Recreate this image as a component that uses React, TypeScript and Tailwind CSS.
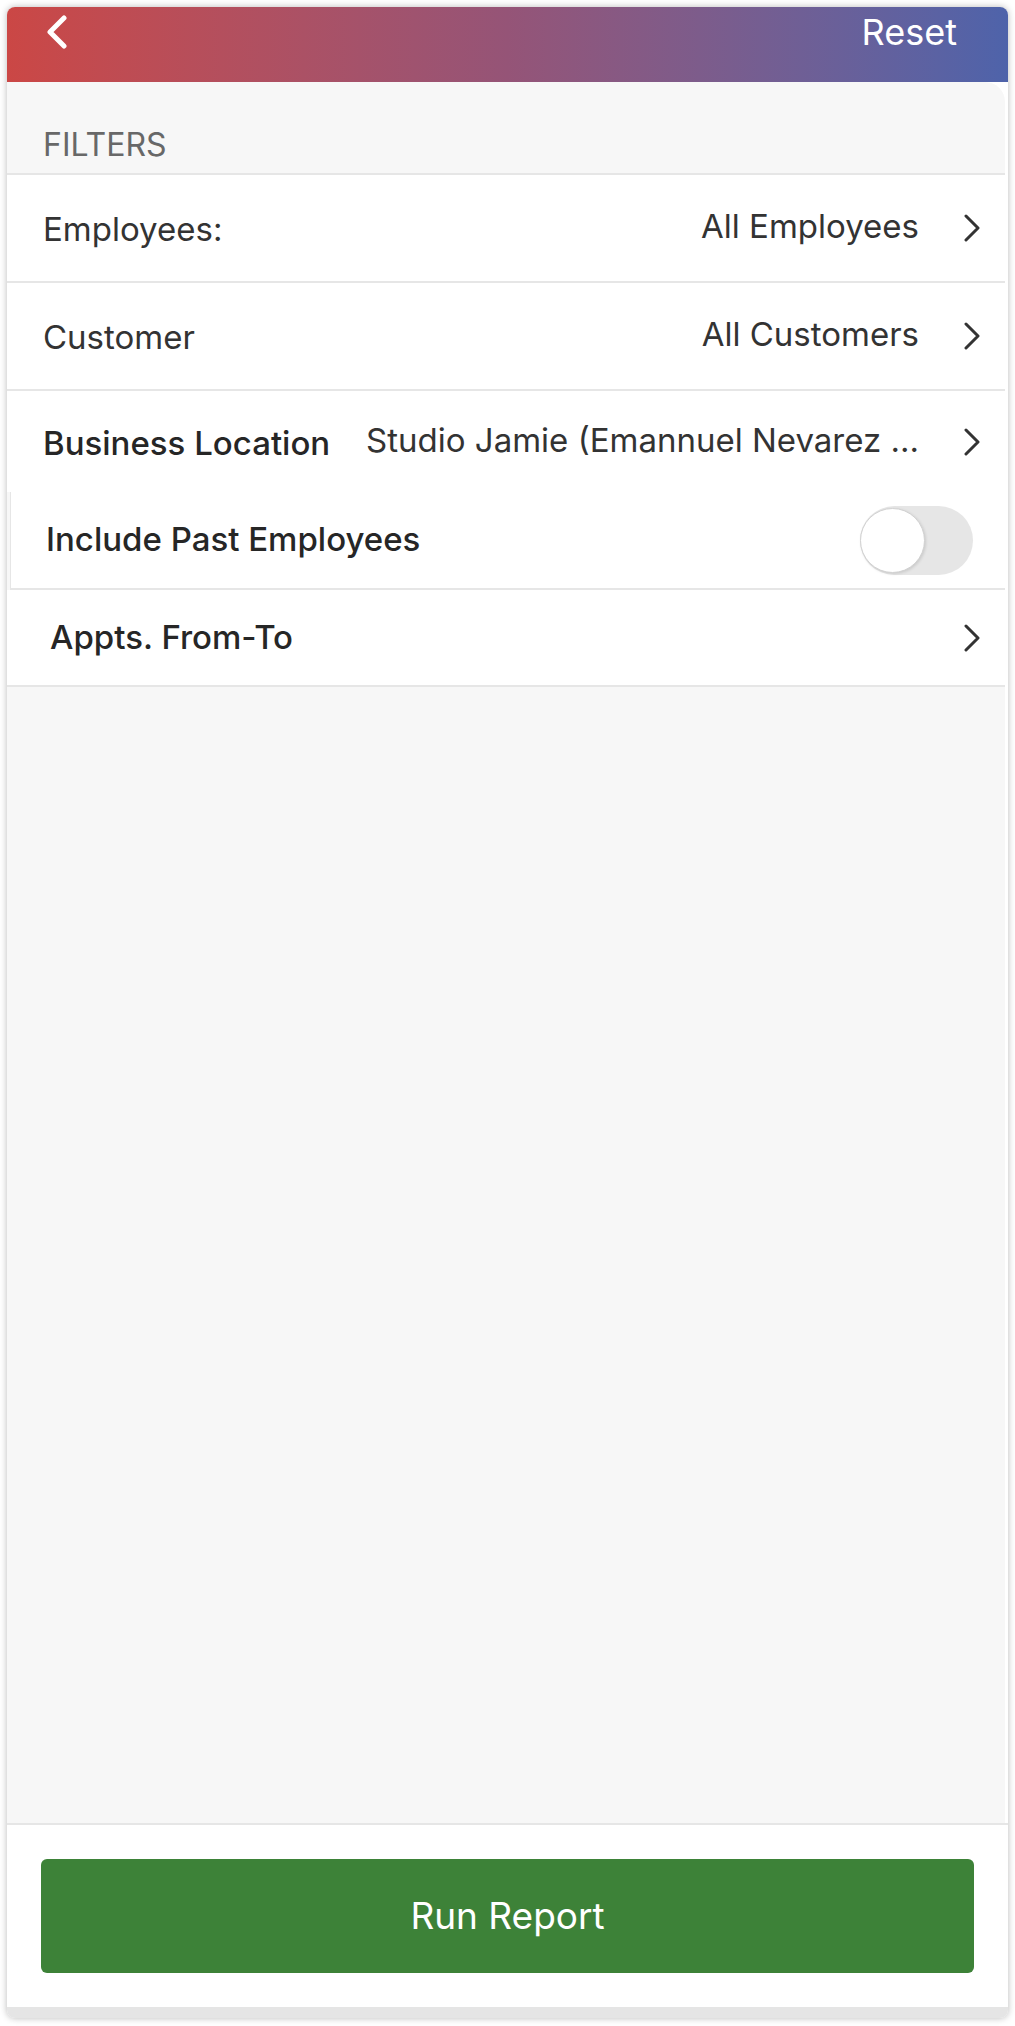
import React from 'react';

const Chevron: React.FC<{ className?: string }> = ({ className }) => (
  <svg viewBox="0 0 20 28" className={className} fill="none">
    <path d="M4 2 L16 14 L4 26" stroke="currentColor" strokeWidth="3" strokeLinecap="round" strokeLinejoin="round" />
  </svg>
);

const NavRow: React.FC<{ label: string; value?: string; bold?: boolean; height: string; border?: boolean }> = ({
  label,
  value,
  bold,
  height,
  border = true,
}) => (
  <div className={`flex items-center bg-white pl-[36px] pr-[23px] ${height} ${border ? 'border-b-2 border-[#e6e6e6]' : ''}`}>
    <span className={`shrink-0 text-[33px] leading-[1.25] pt-[4px] ${bold ? 'font-medium text-[#262626]' : 'text-[#333]'}`}>
      {label}
    </span>
    <span className="ml-auto whitespace-nowrap pl-[20px] pb-[2px] text-[33px] leading-[1.25] text-[#333]">{value}</span>
    <Chevron className="ml-[43px] h-[28px] w-[20px] shrink-0 text-[#333]" />
  </div>
);

const App: React.FC = () => {
  return (
    <div className="h-[2026px] w-full bg-white p-[7px] pb-[8px] font-['Inter','Liberation_Sans',sans-serif]">
      <div className="flex h-full flex-col overflow-hidden rounded-[8px] bg-white shadow-[0_0_7px_rgba(0,0,0,0.28)]">
        {/* header */}
        <div className="flex h-[75px] shrink-0 items-start bg-gradient-to-r from-[#cb4745] via-[#955477] to-[#4e63aa] pl-[39px] pr-[51px] pt-[8px]">
          <svg viewBox="0 0 22 34" className="h-[34px] w-[22px]" fill="none">
            <path d="M18 3 L4 17 L18 31" stroke="white" strokeWidth="5" strokeLinecap="round" strokeLinejoin="round" />
          </svg>
          <span className="-mt-[4px] ml-auto text-[36px] leading-[1.2] text-white">Reset</span>
        </div>

        {/* filters */}
        <div className="mr-[3px] flex flex-1 flex-col rounded-tr-[20px] bg-[#f7f7f7]">
          <div className="h-[93px] border-b-2 border-[#e6e6e6] pl-[36px] pt-[43px]">
            <span className="text-[32px] leading-[1.25] text-[#686868]">FILTERS</span>
          </div>
          <NavRow label="Employees:" value="All Employees" height="h-[108px]" />
          <NavRow label="Customer" value="All Customers" height="h-[108px]" />
          <NavRow
            label="Business Location"
            value="Studio Jamie (Emannuel Nevarez ..."
            bold
            height="h-[101px]"
            border={false}
          />
          <div className="ml-[3px] flex h-[98px] items-center border-b-2 border-l border-[#e6e6e6] bg-white pl-[35px] pr-[32px]">
            <span className="text-[33px] font-medium leading-[1.25] text-[#262626]">Include Past Employees</span>
            <div className="relative ml-auto h-[69px] w-[113px] rounded-full bg-[#e6e6e6]">
              <div className="absolute left-0 top-[2px] h-[65px] w-[65px] rounded-full border border-[#d2d2d2] bg-white shadow-[1px_1px_3px_rgba(0,0,0,0.12)]" />
            </div>
          </div>
          <div className="flex h-[97px] items-center border-b-2 border-[#e6e6e6] bg-white pl-[43px] pr-[23px]">
            <span className="text-[33px] font-medium leading-[1.25] text-[#262626]">Appts. From-To</span>
            <Chevron className="ml-auto h-[28px] w-[20px] text-[#333]" />
          </div>
        </div>

        {/* footer */}
        <div className="shrink-0 border-t-2 border-[#e6e6e6] bg-white px-[34px] pb-[34px] pt-[34px]">
          <button className="flex h-[114px] w-full items-center justify-center rounded-[6px] bg-[#3d8238] text-[37px] text-white">
            Run Report
          </button>
        </div>
        <div className="h-[11px] shrink-0 bg-[#e5e5e5]" />
      </div>
    </div>
  );
};

export default App;
